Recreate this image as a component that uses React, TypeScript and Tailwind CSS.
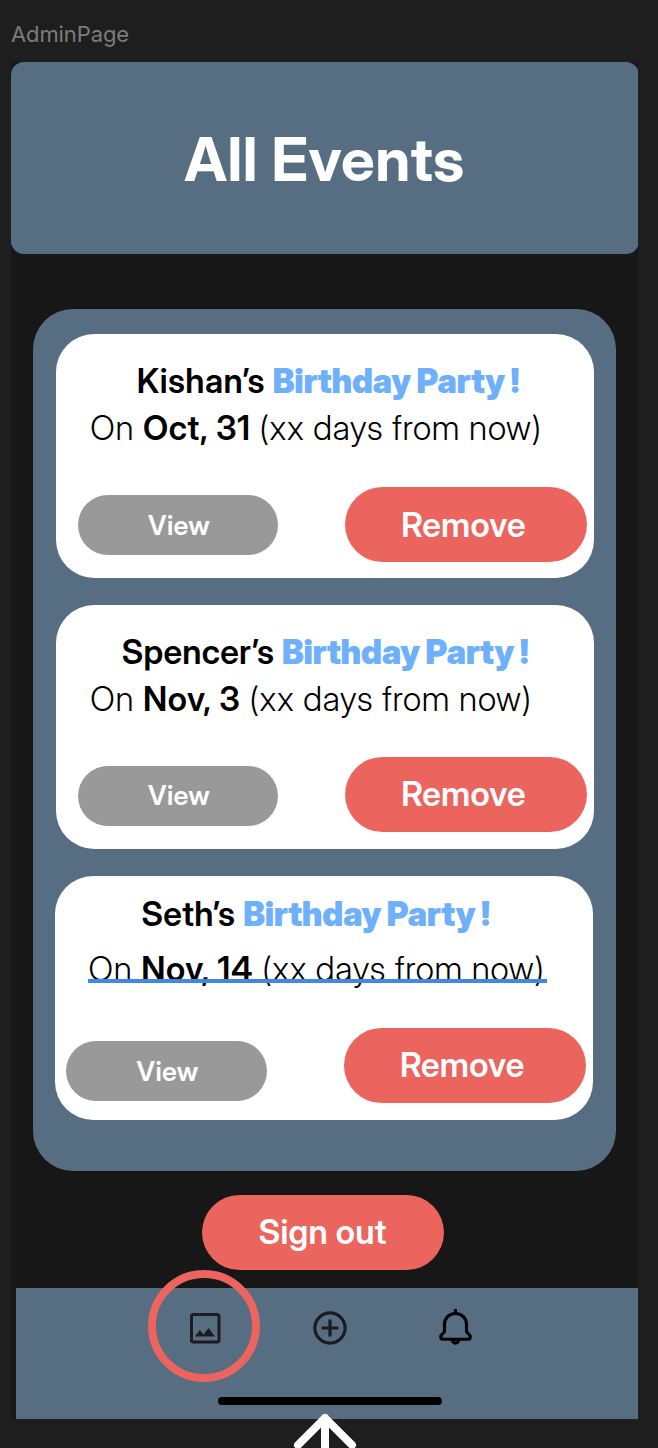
import type { ReactNode } from "react";

type EventCard = {
  name: string;
  date: string;
  card: string;
  title: string;
  when: string;
  actions: string;
  view: string;
  label: string;
};

const events: EventCard[] = [
  {
    name: "Kishan’s",
    date: "Oct, 31",
    card: "ml-[23.25px] pt-[22.5px]",
    title: "pl-[80.5px] tracking-[0.45px]",
    when: "ml-[33px]",
    actions: "mt-[36px]",
    view: "ml-[21.5px] mt-[8.5px] mr-[66.5px]",
    label: "pb-0",
  },
  {
    name: "Spencer’s",
    date: "Nov, 3",
    card: "ml-[23.25px] mt-[27px] pt-[22.5px]",
    title: "pl-[65.5px] tracking-[0.25px]",
    when: "ml-[33px]",
    actions: "mt-[35.5px]",
    view: "ml-[21.5px] mt-[8.5px] mr-[66.5px]",
    label: "pb-[2px]",
  },
  {
    name: "Seth’s",
    date: "Nov, 14",
    card: "ml-[21.5px] mt-[27px] pt-[14.5px]",
    title: "pl-[87px] tracking-[0.35px]",
    when: "ml-[33px] mt-[7.5px]",
    actions: "mt-[36px]",
    view: "ml-[11.750px] mt-[13.5px] mr-[76.75px]",
    label: "pb-[2px]",
  },
];

function PillButton({ children, className = "" }: { children: ReactNode; className?: string }) {
  return (
    <button
      className={`flex h-[75px] w-[242.5px] shrink-0 items-center justify-center rounded-[37.5px] bg-[#ec645e] text-[33.6px] font-semibold tracking-[0.25px] text-white ${className}`}
    >
      {children}
    </button>
  );
}

function Card({ event, underlined }: { event: EventCard; underlined: boolean }) {
  return (
    <article className={`flex h-[243.75px] w-[538px] flex-col rounded-[38px] bg-white text-[33.6px] leading-[47px] whitespace-nowrap text-black ${event.card}`}>
      <h2 className={`h-[47px] font-semibold ${event.title}`}>
        {event.name} <span className="font-black tracking-[-0.33px] text-[#6eb0fb]">Birthday Party !</span>
      </h2>
      <p className={`relative h-[47px] w-[460px] pl-px font-light tracking-[0.73px] ${event.when}`}>
        On <span className="font-semibold tracking-[0.6px]">{event.date}</span> (xx days from now)
        {underlined && <span className="absolute top-[34px] left-0 h-1 w-[459px] bg-[#4189e0]" />}
      </p>
      <div className={`flex items-start ${event.actions}`}>
        <button className={`h-[60px] w-[200.5px] shrink-0 rounded-[30px] bg-[#999999] pl-[2px] text-[26.9px] font-semibold tracking-[0.3px] text-white ${event.view}`}>
          View
        </button>
        <PillButton className={`pr-[5px] ${event.label}`}>Remove</PillButton>
      </div>
    </article>
  );
}

function ImageIcon() {
  return (
    <svg className="size-[31px]" viewBox="0 0 31 31" fill="none">
      <rect x="1.5" y="1.5" width="27.5" height="27.5" rx="2" stroke="#1d1b20" strokeWidth="3" />
      <path d="M5 23.5 9.8 17l3.6 4.5L18.6 15 25 23.5Z" fill="#1d1b20" />
    </svg>
  );
}

function AddIcon() {
  return (
    <svg className="size-[34px]" viewBox="0 0 34 34" fill="none" stroke="#1d1b20" strokeWidth="3.2">
      <circle cx="17" cy="17" r="15.1" />
      <path d="M17 8.6v16.8M8.6 17h16.8" />
    </svg>
  );
}

function BellIcon() {
  return (
    <svg className="h-[38px] w-[34px]" viewBox="0 0 34 38" fill="none" stroke="#000" strokeWidth="3.1" strokeLinejoin="round">
      <path d="M16.500 1v5" strokeLinecap="butt" />
      <path d="M16.500 5.500C10 5.500 5.500 10.200 5.500 16.500v6.500c0 1.200-.6 1.900-1.900 2.700C2.200 26.600 1.800 27.500 1.800 29.200c0 1.400.7 2 2 2h25.400c1.300 0 2-.6 2-2 0-1.700-.4-2.600-1.800-3.500C28.100 24.900 27.500 24.200 27.500 23v-6.500C27.500 10.200 23 5.500 16.500 5.500Z" />
      <path d="M13.200 31.500a3.300 3.600 0 0 0 6.600 0" />
    </svg>
  );
}

export default function App() {
  return (
    <div className="relative h-[1448px] w-[658px] overflow-hidden bg-[#1e1e1e] font-['Inter',sans-serif]">
      <div className="h-[62px] pt-[18px] pl-[11px] text-[22px] leading-8 tracking-[-0.1px] text-[#7c7c7c]">AdminPage</div>

      <main className="ml-[11px] flex h-[1356.5px] w-[627px] flex-col overflow-hidden bg-[#171717] font-['Inter_Display','Inter',sans-serif]">
        <header className="flex h-[192px] w-[628px] shrink-0 items-center justify-center rounded-[13px] bg-[#576d82] pt-[1px] pr-[1px]">
          <h1 className="text-[60px] leading-none font-bold tracking-[0.5px] text-white">All Events</h1>
        </header>

        <section className="mt-[55.250px] ml-[22px] h-[861.5px] w-[583px] shrink-0 rounded-[40px] bg-[#576d82] pt-[25px]">
          {events.map((event, index) => (
            <Card key={event.name} event={event} underlined={index === 2} />
          ))}
        </section>

        <PillButton className="mt-[23.75px] ml-[190.5px]">Sign out</PillButton>

        <nav className="mt-[18px] ml-[5px] flex h-[131px] w-[622px] shrink-0 flex-col bg-[#576d82]">
          <div className="flex h-[109px] items-start pt-[20px]">
            <span className="relative mt-[5px] ml-[174px]">
              <ImageIcon />
              <span className="absolute -top-[43px] -left-[42px] size-[112px] rounded-full border-8 border-[#ec645e]" />
            </span>
            <span className="mt-[3px] ml-[92px]">
              <AddIcon />
            </span>
            <span className="ml-[91.5px]">
              <BellIcon />
            </span>
          </div>
          <div className="ml-[202px] h-[8px] w-[224px] rounded-full bg-black" />
        </nav>
      </main>

      <svg className="absolute top-[1408px] left-[285px] h-[40px] w-[80px]" viewBox="0 0 80 40" fill="none" stroke="#fff" strokeWidth="8" strokeLinecap="round" strokeLinejoin="round">
        <path d="M13 37 40 10l27 27M40 10v40" />
      </svg>
    </div>
  );
}
